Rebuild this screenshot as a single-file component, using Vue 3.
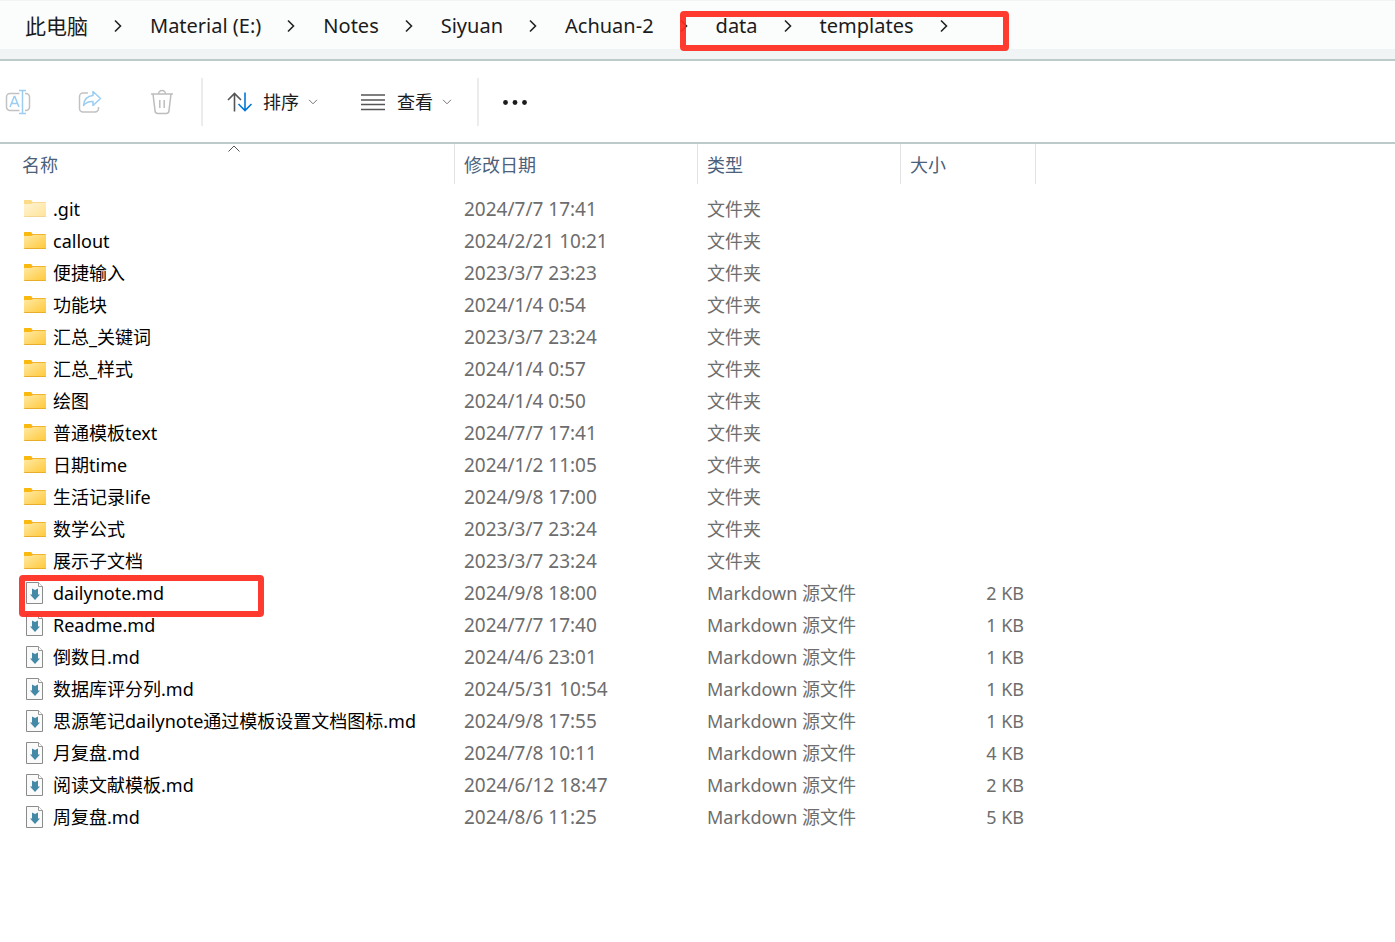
<script setup>
const crumbs = ['此电脑', 'Material (E:)', 'Notes', 'Siyuan', 'Achuan-2', 'data', 'templates']

const folder = (name, date, hidden = false) => ({ name, date, hidden, type: '文件夹', size: '' })
const markdown = (name, date, size, marked = false) => ({ name, date, size, marked, type: 'Markdown 源文件' })

const entries = [
  folder('.git', '2024/7/7 17:41', true),
  folder('callout', '2024/2/21 10:21'),
  folder('便捷输入', '2023/3/7 23:23'),
  folder('功能块', '2024/1/4 0:54'),
  folder('汇总_关键词', '2023/3/7 23:24'),
  folder('汇总_样式', '2024/1/4 0:57'),
  folder('绘图', '2024/1/4 0:50'),
  folder('普通模板text', '2024/7/7 17:41'),
  folder('日期time', '2024/1/2 11:05'),
  folder('生活记录life', '2024/9/8 17:00'),
  folder('数学公式', '2023/3/7 23:24'),
  folder('展示子文档', '2023/3/7 23:24'),
  markdown('dailynote.md', '2024/9/8 18:00', '2 KB', true),
  markdown('Readme.md', '2024/7/7 17:40', '1 KB'),
  markdown('倒数日.md', '2024/4/6 23:01', '1 KB'),
  markdown('数据库评分列.md', '2024/5/31 10:54', '1 KB'),
  markdown('思源笔记dailynote通过模板设置文档图标.md', '2024/9/8 17:55', '1 KB'),
  markdown('月复盘.md', '2024/7/8 10:11', '4 KB'),
  markdown('阅读文献模板.md', '2024/6/12 18:47', '2 KB'),
  markdown('周复盘.md', '2024/8/6 11:25', '5 KB'),
]
</script>

<template>
  <div class="explorer">
    <nav class="address" aria-label="路径">
      <ol class="crumbs">
        <li v-for="crumb in crumbs" :key="crumb">
          <button type="button" class="crumb" :class="{ cjk: crumb === '此电脑' }">{{ crumb }}</button>
          <svg class="chevron" width="10" height="14" viewBox="0 0 10 14" aria-hidden="true">
            <path d="M2 1.500 7.500 7 2 12.500" fill="none" stroke="#222" stroke-width="1.600" />
          </svg>
        </li>
      </ol>
      <span class="mark mark-path"></span>
    </nav>

    <div class="toolbar" role="toolbar">
      <button type="button" class="tool" aria-label="重命名">
        <svg width="26" height="26" viewBox="0 0 26 26" fill="none" stroke-width="1.5">
          <path d="M14.5 4.5H5A3.5 3.5 0 0 0 1.500 8v10A3.5 3.5 0 0 0 5 21.500h9.500M20 4.500h1A3.500 3.500 0 0 1 24.500 8v10A3.500 3.500 0 0 1 21 21.500h-1" stroke="#c2c2c2" />
          <path d="M5 18 9.200 7.500h.6L14 18M6.500 14.500h6M14 1.500h7M14 24.500h7M17.500 1.500v23" stroke="#9bcdf2" />
        </svg>
      </button>
      <button type="button" class="tool" aria-label="共享">
        <svg width="26" height="26" viewBox="0 0 26 26" fill="none" stroke-width="1.500" stroke-linejoin="round">
          <path d="M11 4H6A3.500 3.500 0 0 0 2.500 7.500v12A3.500 3.500 0 0 0 6 23h12a3.500 3.500 0 0 0 3.500-3.500V18" stroke="#c2c2c2" />
          <path d="M16 2.500 23.500 9.500 16 16.500v-4c-4-.2-7 .8-9.500 4C7 10.500 10 7 16 6.500z" stroke="#9bcdf2" />
        </svg>
      </button>
      <button type="button" class="tool" aria-label="删除">
        <svg width="26" height="26" viewBox="0 0 26 26" fill="none" stroke="#bdbdbd" stroke-width="1.500">
          <path d="M2 5h22M9.500 5a3.500 3.500 0 0 1 7 0M4 5l2 16.500A3 3 0 0 0 9 24.500h8a3 3 0 0 0 3-3L22 5M10.800 11v8M15.200 11v8" />
        </svg>
      </button>
      <span class="divider"></span>
      <button type="button" class="menu sort">
        <svg width="26" height="22" viewBox="0 0 26 22" fill="none" stroke-width="1.600">
          <path d="M7.500 20.500V2.500M1 9 7.500 2.500 14 9" stroke="#555" />
          <path d="M18 1.500v17.500M11.500 13l6.500 6.500L24.500 13" stroke="#0078d7" />
        </svg>
        <span>排序</span>
        <svg class="caret" width="10" height="6" viewBox="0 0 10 6" fill="none"><path d="m1 .8 4 4 4-4" stroke="#777" /></svg>
      </button>
      <button type="button" class="menu view">
        <svg width="24" height="18" viewBox="0 0 24 18"><path d="M0 2h24M0 7h24M0 11.500h24M0 16.500h24" stroke="#555" stroke-width="1.300" /></svg>
        <span>查看</span>
        <svg class="caret" width="10" height="6" viewBox="0 0 10 6" fill="none"><path d="m1 .8 4 4 4-4" stroke="#777" /></svg>
      </button>
      <span class="divider"></span>
      <button type="button" class="more" aria-label="更多">
        <svg width="26" height="6" viewBox="0 0 26 6" fill="#1b1b1b"><circle cx="3.500" cy="3.500" r="2.400" /><circle cx="13" cy="3.500" r="2.400" /><circle cx="22.500" cy="3.500" r="2.400" /></svg>
      </button>
    </div>

    <main class="listing">
      <table>
        <colgroup>
          <col class="col-name" /><col class="col-date" /><col class="col-type" /><col class="col-size" />
        </colgroup>
        <thead>
          <tr>
            <th scope="col" aria-sort="ascending">
              <button type="button">名称</button>
              <svg class="sorted" width="12" height="7" viewBox="0 0 12 7" fill="none" aria-hidden="true"><path d="M.5 6.500 6 1l5.500 5.500" stroke="#555" /></svg>
            </th>
            <th scope="col"><button type="button">修改日期</button></th>
            <th scope="col"><button type="button">类型</button></th>
            <th scope="col"><button type="button">大小</button></th>
          </tr>
        </thead>
        <tbody>
          <tr v-for="entry in entries" :key="entry.name">
            <td class="name">
              <div class="entry">
                <svg v-if="entry.size" width="22" height="22" viewBox="0 0 22 22" aria-hidden="true">
                  <path d="M2.500.5h12l4 4v17h-16z" fill="#fafafa" stroke="#8b8b8b" />
                  <path d="M14.500.5v4h4" fill="#fff" stroke="#999" />
                  <path d="M8 6.500 11 8l3-1.500v6h2L11 18l-5-5.500h2z" fill="#4489a8" />
                </svg>
                <svg v-else :class="{ faded: entry.hidden }" width="22" height="22" viewBox="0 0 22 22" aria-hidden="true">
                  <defs>
                    <linearGradient id="folder-face" x1="0" y1="0" x2="1" y2="1">
                      <stop offset="0" stop-color="#ffe9a6" /><stop offset="1" stop-color="#ffc937" />
                    </linearGradient>
                  </defs>
                  <path d="M0 3a1 1 0 0 1 1-1h6l1.500 2H21a1 1 0 0 1 1 1V18H0z" fill="#f3b229" />
                  <path d="M0 3a1 1 0 0 1 1-1h6l1 2-1 2H0z" fill="#fbb80f" />
                  <path d="M0 6h7L9 5h13v13a1 1 0 0 1-1 1H1a1 1 0 0 1-1-1z" fill="url(#folder-face)" />
                  <path d="M0 18h22a1 1 0 0 1-1 1H1a1 1 0 0 1-1-1z" fill="#e9ad2c" />
                </svg>
                <span>{{ entry.name }}</span>
              </div>
              <span v-if="entry.marked" class="mark mark-file"></span>
            </td>
            <td class="date">{{ entry.date }}</td>
            <td>{{ entry.type }}</td>
            <td class="size">{{ entry.size }}</td>
          </tr>
        </tbody>
      </table>
    </main>
  </div>
</template>

<style>
body {
  margin: 0;
  background: #fff;
}
</style>

<style scoped>
.explorer {
  min-height: 100vh;
  overflow: hidden;
  background: #fff;
  color: #1b1b1b;
  font-family: "Noto Sans", "Noto Sans CJK SC", sans-serif;
  font-size: 18px;
  line-height: 24px;
}

button {
  margin: 0;
  padding: 0;
  border: 0;
  background: none;
  color: inherit;
  font: inherit;
  white-space: nowrap;
}

svg {
  display: block;
  flex: none;
}

.address {
  position: relative;
  border-top: 1px solid #f0f4f5;
  border-bottom: 2px solid #bccbca;
  background: #f0f4f5;
  padding-bottom: 10px;
}

.crumbs {
  display: flex;
  box-sizing: border-box;
  align-items: center;
  height: 48px;
  margin: 0;
  padding: 2px 25px 0;
  background: #fbfdfc;
  list-style: none;
}

.crumbs li {
  display: flex;
  align-items: center;
}

.crumb {
  font-size: 20px;
  line-height: 28px;
}

.crumb.cjk {
  font-size: 21px;
}

.chevron {
  margin: 0 27px 0 25px;
}

.mark {
  position: absolute;
  z-index: 1;
  box-sizing: border-box;
  border: 6px solid rgba(255, 42, 30, 0.92);
  border-radius: 4px;
  pointer-events: none;
}

.mark-path {
  top: 10px;
  left: 680px;
  width: 329px;
  height: 40px;
}

.mark-file {
  top: -2px;
  left: 19px;
  width: 245px;
  height: 42px;
}

.toolbar {
  display: flex;
  align-items: center;
  height: 81px;
  padding-left: 5px;
  border-bottom: 2px solid #bccbca;
}

.tool {
  margin-right: 46px;
}

.tool + .divider {
  margin-left: -20px;
}

.divider {
  width: 2px;
  height: 48px;
  background: #ececec;
}

.menu {
  display: flex;
  align-items: center;
}

.caret {
  margin-left: 9px;
}

.sort {
  margin-left: 24px;
}

.sort span {
  margin-left: 10px;
}

.view {
  margin: 0 25px 0 43px;
}

.view span {
  margin-left: 12px;
}

.more {
  margin-left: 23px;
}

.listing {
  padding-bottom: 32px;
}

table {
  width: 1036px;
  border-collapse: separate;
  border-spacing: 0;
  table-layout: fixed;
}

.col-name { width: 455px; }
.col-date { width: 243px; }
.col-type { width: 203px; }
.col-size { width: 135px; }

th {
  position: relative;
  box-sizing: border-box;
  height: 40px;
  padding: 2px 0 0 9px;
  border-right: 1px solid #e3e3e3;
  color: #4c607a;
  font-weight: 400;
  text-align: left;
}

th:first-child {
  padding-left: 22px;
}

.sorted {
  position: absolute;
  top: 1px;
  left: 228px;
}

tbody::before {
  display: block;
  height: 9px;
  content: "";
}

td {
  height: 32px;
  padding: 0 0 0 9px;
  color: #6d6d6d;
  white-space: nowrap;
}

.name {
  position: relative;
  padding-left: 24px;
  color: #000;
}

.entry {
  display: flex;
  align-items: center;
  gap: 7px;
}

.faded {
  opacity: 0.5;
}

.date {
  font-size: 19px;
}

.size {
  padding-right: 12px;
  text-align: right;
}
</style>
